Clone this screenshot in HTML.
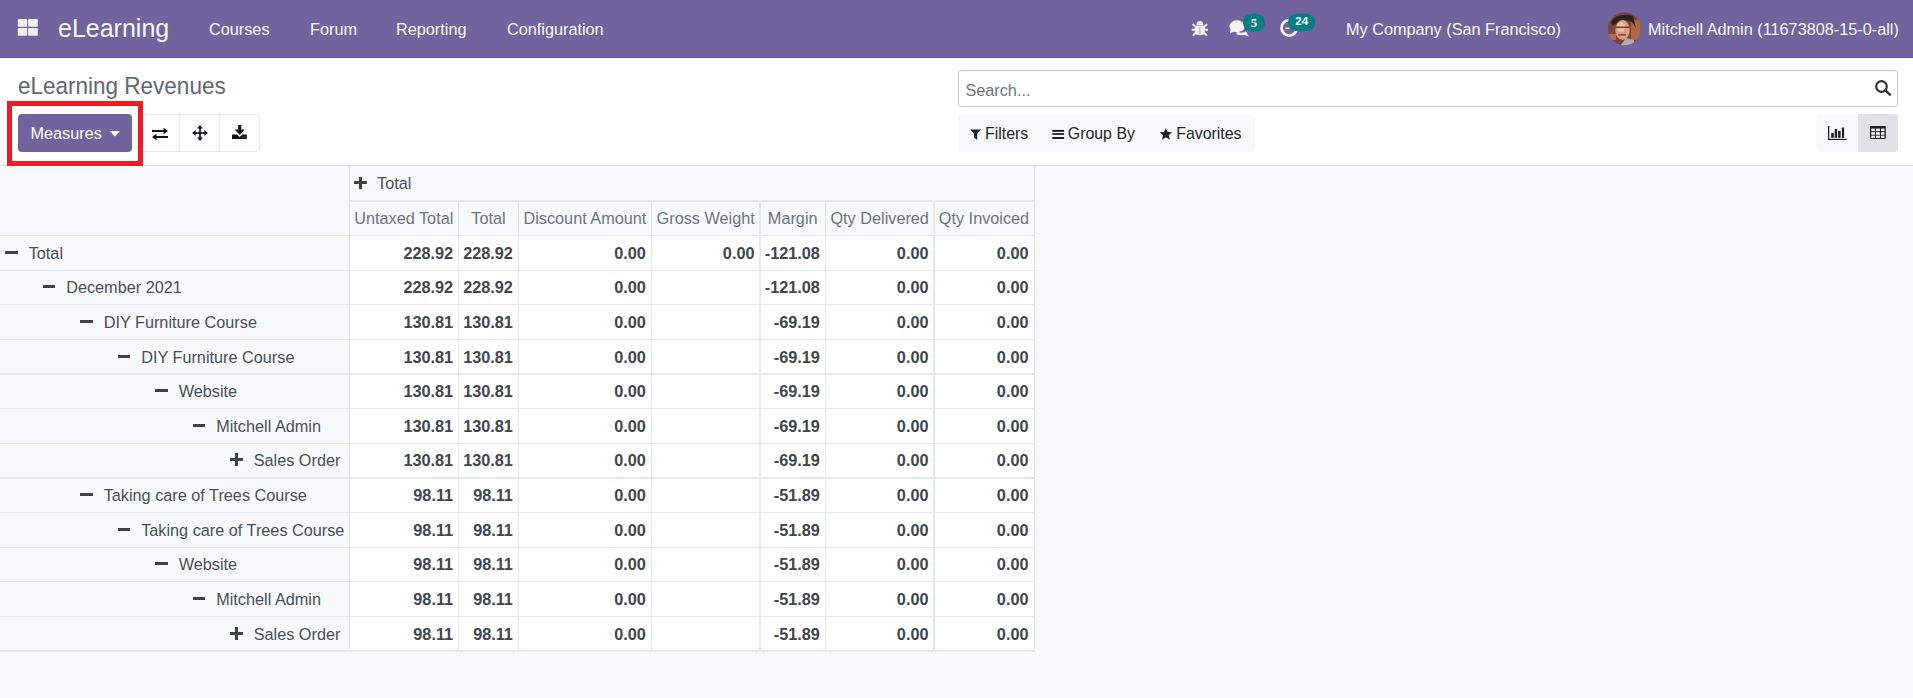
<!DOCTYPE html>
<html><head><meta charset="utf-8"><title>eLearning Revenues</title>
<style>
*{box-sizing:border-box;margin:0;padding:0}
html,body{width:1913px;height:698px;overflow:hidden;background:#f8f9fa;font-family:"Liberation Sans", sans-serif;}
.ic{position:absolute;z-index:5}
.abs, .hb,.db,.hl,.vl,.ht,.mh,.rt,.dv,.mi,.pl{position:absolute}
#nav{position:absolute;left:0;top:0;width:1913px;height:58px;background:#71639e;border-bottom:1px solid #5f5387}
.nt{position:absolute;color:#f8f8f8;font-size:16.25px;white-space:nowrap;line-height:20px}
#cp{position:absolute;left:0;top:58px;width:1913px;height:108px;background:#fff;border-bottom:1px solid #dde1e6}
.hb{background:#f8f9fa}
.db{background:#fff}
.hl{height:1px;background:#e5e8eb}
.vl{width:1px;background:#e5e8eb}
.ht{font-size:16.25px;color:#495057;white-space:nowrap}
.mh{font-size:16.25px;color:#6c757d;text-align:center;white-space:nowrap}
.rt{font-size:16.25px;color:#495057;white-space:nowrap}
.dv{font-size:16.25px;color:#40464d;font-weight:bold;white-space:nowrap;text-align:right}
.mi{width:12.7px;height:3px;background:#3d434a}
.pl{width:12.7px;height:12.7px}
.pl i{position:absolute;left:0;top:4.85px;width:12.7px;height:3px;background:#3d434a}
.pl b{position:absolute;left:4.85px;top:0;width:3px;height:12.7px;background:#3d434a}
</style></head>
<body>
<div id="nav">
  <svg style="position:absolute;left:14px;top:15px" width="28" height="25" viewBox="14 15 28 25">
    <rect x="17.8" y="18.9" width="9.4" height="7.9" rx="0.9" fill="#f0f0f2"/>
    <rect x="28.1" y="18.9" width="9.7" height="7.9" rx="0.9" fill="#f0f0f2"/>
    <rect x="17.8" y="27.9" width="9.4" height="7.8" rx="0.9" fill="#f0f0f2"/>
    <rect x="28.1" y="27.9" width="9.7" height="7.8" rx="0.9" fill="#f0f0f2"/>
  </svg>
  <div class="nt" style="left:58px;top:14px;font-size:25px;line-height:28px;transform:scaleY(1.06);transform-origin:0 100%">eLearning</div>
  <div class="nt" style="left:209px;top:19px">Courses</div>
  <div class="nt" style="left:310px;top:19px">Forum</div>
  <div class="nt" style="left:396px;top:19px">Reporting</div>
  <div class="nt" style="left:507px;top:19px">Configuration</div>
  <div class="nt" style="left:1346px;top:19px">My Company (San Francisco)</div>
  <svg style="position:absolute;left:1607px;top:12px" width="35" height="34" viewBox="1607 12 35 34">
    <defs><clipPath id="av"><circle cx="1624.4" cy="28.8" r="16.4"/></clipPath></defs>
    <g clip-path="url(#av)">
      <rect x="1607" y="12" width="35" height="34" fill="#7e4234"/>
      <rect x="1631" y="20" width="11" height="20" fill="#b0683f"/>
      <rect x="1607" y="24" width="8" height="10" fill="#7d4536"/>
      <rect x="1608" y="34" width="8" height="6" fill="#b07050"/>
      <path d="M1611 22 Q1618 12 1633 16 L1636 28 L1632 22 Q1622 17 1613 26 Z" fill="#2a2220"/>
      <ellipse cx="1622.5" cy="30" rx="7.2" ry="10" fill="#d8a07e"/>
      <ellipse cx="1621" cy="27" rx="4" ry="5" fill="#eac2a8"/>
      <rect x="1616" y="26.5" width="13" height="1.6" fill="#7a4030"/>
      <rect x="1618" y="34" width="8" height="1.6" fill="#8a4a3a"/>
      <path d="M1620 46 L1626 38 L1634 40 L1634 46 Z" fill="#a9adb3"/>
    </g>
  </svg>
  <div class="nt" style="left:1648px;top:19px">Mitchell Admin (11673808-15-0-all)</div>

<!-- navbar icons -->
<svg class="ic" style="left:0;top:0" width="1913" height="58" viewBox="0 0 1913 58">
  <g fill="#f3f3f3" stroke="none">
    <path d="M1196.4 25.4 A3.5 4.3 0 0 1 1203.4 25.4 Z"/>
    <path d="M1194.8 25.8 L1205 25.8 L1205 31.5 Q1205 35.3 1199.9 35.3 Q1194.8 35.3 1194.8 31.5 Z"/>
  </g>
  <g stroke="#f3f3f3" stroke-width="1.9" stroke-linecap="butt" fill="none">
    <path d="M1195.2 26.6 L1192.8 24 M1204.6 26.6 L1207 24 M1195 29.8 L1191.8 29.8 M1204.8 29.8 L1208 29.8 M1195.4 33 L1193 35.6 M1204.4 33 L1206.8 35.6"/>
  </g>
  <path d="M1199.9 27.2 L1199.9 34.8" stroke="#a89cc4" stroke-width="1"/>
  <!-- comments -->
  <g fill="#f3f3f3">
    <ellipse cx="1237" cy="26.3" rx="7.6" ry="6.1"/>
    <path d="M1230.5 29.5 L1229.8 33.6 L1234.5 31.5 Z"/>
    <path d="M1238 32 Q1242 33.5 1246 31.5 L1249 36.8 L1244.5 35 Q1240 36 1236 34 Z"/>
  </g>
  <rect x="1243" y="13.7" width="22" height="18" rx="9" fill="#017e84"/>
  <text x="1254" y="27" font-family="Liberation Serif" font-weight="bold" font-size="13" fill="#fff" text-anchor="middle">5</text>
  <!-- clock -->
  <circle cx="1289.2" cy="27.9" r="7.7" fill="none" stroke="#f3f3f3" stroke-width="2.8"/>
  <rect x="1285.5" y="27.5" width="4" height="1.6" fill="#f3f3f3"/>
  <rect x="1288" y="13.7" width="27.2" height="17.3" rx="8.6" fill="#017e84"/>
  <text x="1301.8" y="25.2" font-family="Liberation Sans" font-weight="bold" font-size="11.6" fill="#fff" text-anchor="middle">24</text>
</svg>
</div>
<div id="cp">
  <div style="position:absolute;left:18px;top:16px;font-size:22.5px;color:#5f6771;white-space:nowrap;line-height:26px;transform:scaleY(1.08);transform-origin:0 78%">eLearning Revenues</div>
  <div style="position:absolute;left:18px;top:56px;width:114px;height:38px;background:#71639e;border-radius:4px;color:#fff;font-size:16.25px;line-height:38px;padding-left:12.5px;white-space:nowrap">Measures</div>
  <div style="position:absolute;left:139px;top:56px;width:121px;height:38px;border:1px solid #e5e8eb;border-radius:4px;background:#fff"></div>
  <div style="position:absolute;left:179px;top:56px;width:1px;height:38px;background:#e5e8eb"></div>
  <div style="position:absolute;left:219px;top:56px;width:1px;height:38px;background:#e5e8eb"></div>
  <div style="position:absolute;left:7px;top:43px;width:136px;height:65px;border:5px solid #ed1c24"></div>
  <div style="position:absolute;left:958px;top:12px;width:940px;height:37px;border:1px solid #c8c9cb;border-radius:3.5px;background:#fff"></div>
  <div style="position:absolute;left:965.4px;top:13px;height:37px;line-height:39px;font-size:16.25px;color:#6c757d">Search...</div>
  <div style="position:absolute;left:958px;top:56px;width:297px;height:38px;background:#f8f9fa;border-radius:4px"></div>
  <div style="position:absolute;left:985px;top:56.8px;line-height:38px;font-size:15.9px;color:#212529;white-space:nowrap">Filters</div>
  <div style="position:absolute;left:1067.8px;top:56.8px;line-height:38px;font-size:15.9px;color:#212529;white-space:nowrap">Group By</div>
  <div style="position:absolute;left:1176.2px;top:56.8px;line-height:38px;font-size:15.9px;color:#212529;white-space:nowrap">Favorites</div>
  <div style="position:absolute;left:1816px;top:56px;width:82px;height:38px;background:#f8f9fa;border-radius:4px;overflow:hidden"><div style="position:absolute;left:42px;top:0;width:40px;height:38px;background:#dee2e6"></div></div>
</div>

<svg class="ic" style="left:0;top:58px" width="1913" height="108" viewBox="0 58 1913 108">
  <!-- caret -->
  <path d="M109.8 131 L120 131 L114.9 136.6 Z" fill="#fff"/>
  <!-- exchange -->
  <g fill="#111418">
    <rect x="152" y="130" width="12" height="2"/>
    <path d="M163.5 127.8 L168 131 L163.5 134.2 Z"/>
    <rect x="156" y="136" width="12" height="2"/>
    <path d="M156.5 133.8 L152 137 L156.5 140.2 Z"/>
  </g>
  <!-- arrows -->
  <g fill="#111418">
    <rect x="195" y="132.2" width="10" height="1.7"/>
    <rect x="199.15" y="128" width="1.7" height="10"/>
    <path d="M192 133 L195.6 130.1 L195.6 135.9 Z"/>
    <path d="M208 133 L204.4 130.1 L204.4 135.9 Z"/>
    <path d="M200 125 L197.1 128.6 L202.9 128.6 Z"/>
    <path d="M200 141 L197.1 137.4 L202.9 137.4 Z"/>
  </g>
  <!-- download -->
  <g fill="#111418">
    <rect x="238.2" y="125" width="3" height="5"/>
    <path d="M234.7 129.6 L244.7 129.6 L239.7 135 Z"/>
    <path d="M232 134.4 L237 134.4 L239.7 137 L242.4 134.4 L246.8 134.4 L246.8 138.9 L232 138.9 Z"/>
  </g>
  <rect x="242.5" y="136.6" width="1" height="1" fill="#6a6a6a"/>
  <rect x="244.5" y="136.6" width="1" height="1" fill="#6a6a6a"/>
  <!-- search -->
  <circle cx="1881.5" cy="86.5" r="5.3" fill="none" stroke="#2f343a" stroke-width="2.2"/>
  <path d="M1885.5 90.5 L1890 94.6" stroke="#2f343a" stroke-width="2.4" stroke-linecap="round"/>
  <!-- filter -->
  <path d="M970.3 129.6 L981.1 129.6 L977.2 133.8 L977.2 140 L974 137.6 L974 133.8 Z" fill="#1d2024"/>
  <!-- bars -->
  <g fill="#1d2024">
    <rect x="1052.3" y="129.9" width="11.8" height="2"/>
    <rect x="1052.3" y="133.1" width="11.8" height="1.8"/>
    <rect x="1052.3" y="137" width="11.8" height="2"/>
  </g>
  <!-- star -->
  <path d="M1165.9 127.9 L1167.7 132.1 L1172 132.3 L1168.7 135.2 L1169.8 139.8 L1165.9 137.3 L1162 139.8 L1163.1 135.2 L1159.8 132.3 L1164.1 132.1 Z" fill="#1d2024"/>
  <!-- chart -->
  <g fill="#1d2024">
    <rect x="1828" y="126" width="1.3" height="14"/>
    <rect x="1828" y="138.8" width="18.7" height="1.2"/>
    <rect x="1831.2" y="132.9" width="2.6" height="4.9"/>
    <rect x="1834.7" y="129" width="2.4" height="8.8"/>
    <rect x="1838.1" y="130.9" width="2.5" height="6.9"/>
    <rect x="1841.9" y="127.5" width="2.2" height="10.3"/>
  </g>
  <!-- table -->
  <rect x="1870" y="126" width="15.8" height="13" rx="0.8" fill="#1d2024"/>
  <g fill="#f4f4f4">
    <rect x="1871.3" y="128.6" width="3.6" height="2.6"/>
    <rect x="1876" y="128.6" width="3.9" height="2.6"/>
    <rect x="1881" y="128.6" width="3.5" height="2.6"/>
    <rect x="1871.3" y="132.2" width="3.6" height="2.6"/>
    <rect x="1876" y="132.2" width="3.9" height="2.6"/>
    <rect x="1881" y="132.2" width="3.5" height="2.6"/>
    <rect x="1871.3" y="135.6" width="3.6" height="2.4"/>
    <rect x="1876" y="135.6" width="3.9" height="2.4"/>
    <rect x="1881" y="135.6" width="3.5" height="2.4"/>
  </g>
</svg>
<div id="tbl">
<div class="hb" style="left:0;top:166px;width:1034px;height:69.5px"></div>
<div class="db" style="left:349px;top:235.500px;width:685px;height:34.583px"></div>
<div class="db" style="left:349px;top:270.083px;width:685px;height:34.583px"></div>
<div class="db" style="left:349px;top:304.667px;width:685px;height:34.583px"></div>
<div class="db" style="left:349px;top:339.250px;width:685px;height:34.583px"></div>
<div class="db" style="left:349px;top:373.833px;width:685px;height:34.583px"></div>
<div class="db" style="left:349px;top:408.417px;width:685px;height:34.583px"></div>
<div class="db" style="left:349px;top:443.000px;width:685px;height:34.583px"></div>
<div class="db" style="left:349px;top:477.583px;width:685px;height:34.583px"></div>
<div class="db" style="left:349px;top:512.167px;width:685px;height:34.583px"></div>
<div class="db" style="left:349px;top:546.750px;width:685px;height:34.583px"></div>
<div class="db" style="left:349px;top:581.333px;width:685px;height:34.583px"></div>
<div class="db" style="left:349px;top:615.917px;width:685px;height:34.583px"></div>
<div class="hl" style="left:349px;top:200px;width:686px;height:2px"></div>
<div class="hl" style="left:0px;top:235px;width:1035px;height:1px"></div>
<div class="hl" style="left:0px;top:270px;width:1035px;height:1px"></div>
<div class="hl" style="left:0px;top:304px;width:1035px;height:1px"></div>
<div class="hl" style="left:0px;top:339px;width:1035px;height:1px"></div>
<div class="hl" style="left:0px;top:373px;width:1035px;height:2px"></div>
<div class="hl" style="left:0px;top:408px;width:1035px;height:1px"></div>
<div class="hl" style="left:0px;top:443px;width:1035px;height:1px"></div>
<div class="hl" style="left:0px;top:477px;width:1035px;height:2px"></div>
<div class="hl" style="left:0px;top:512px;width:1035px;height:1px"></div>
<div class="hl" style="left:0px;top:547px;width:1035px;height:1px"></div>
<div class="hl" style="left:0px;top:581px;width:1035px;height:1px"></div>
<div class="hl" style="left:0px;top:616px;width:1035px;height:1px"></div>
<div class="hl" style="left:0px;top:650px;width:1035px;height:2px"></div>
<div class="vl" style="left:349px;top:166px;width:1px;height:486px"></div>
<div class="vl" style="left:458px;top:200px;width:1px;height:452px"></div>
<div class="vl" style="left:518px;top:200px;width:1px;height:452px"></div>
<div class="vl" style="left:651px;top:200px;width:1px;height:452px"></div>
<div class="vl" style="left:759px;top:200px;width:2px;height:452px"></div>
<div class="vl" style="left:825px;top:200px;width:1px;height:452px"></div>
<div class="vl" style="left:933px;top:200px;width:2px;height:452px"></div>
<div class="vl" style="left:1034px;top:166px;width:1px;height:486px"></div>
<div class="pl" style="left:354.20px;top:176.60px"><i></i><b></b></div>
<div class="ht" style="left:377px;top:166px;height:34.5px;line-height:34.5px">Total</div>
<div class="mh" style="left:349px;top:200.5px;width:109.60000000000002px;height:35px;line-height:35px">Untaxed Total</div>
<div class="mh" style="left:458.6px;top:200.5px;width:59.799999999999955px;height:35px;line-height:35px">Total</div>
<div class="mh" style="left:518.4px;top:200.5px;width:133.0px;height:35px;line-height:35px">Discount Amount</div>
<div class="mh" style="left:651.4px;top:200.5px;width:108.60000000000002px;height:35px;line-height:35px">Gross Weight</div>
<div class="mh" style="left:760px;top:200.5px;width:65.39999999999998px;height:35px;line-height:35px">Margin</div>
<div class="mh" style="left:825.4px;top:200.5px;width:108.60000000000002px;height:35px;line-height:35px">Qty Delivered</div>
<div class="mh" style="left:934px;top:200.5px;width:100px;height:35px;line-height:35px">Qty Invoiced</div>
<div class="mi" style="left:5.20px;top:250.69px"></div>
<div class="rt" style="left:28.70px;top:235.500px;height:34.583px;line-height:34.583px">Total</div>
<div class="dv" style="right:1459.90px;top:235.500px;height:34.583px;line-height:34.583px">228.92</div>
<div class="dv" style="right:1400.10px;top:235.500px;height:34.583px;line-height:34.583px">228.92</div>
<div class="dv" style="right:1267.10px;top:235.500px;height:34.583px;line-height:34.583px">0.00</div>
<div class="dv" style="right:1158.50px;top:235.500px;height:34.583px;line-height:34.583px">0.00</div>
<div class="dv" style="right:1093.10px;top:235.500px;height:34.583px;line-height:34.583px">-121.08</div>
<div class="dv" style="right:984.50px;top:235.500px;height:34.583px;line-height:34.583px">0.00</div>
<div class="dv" style="right:884.50px;top:235.500px;height:34.583px;line-height:34.583px">0.00</div>
<div class="mi" style="left:42.70px;top:285.27px"></div>
<div class="rt" style="left:66.20px;top:270.083px;height:34.583px;line-height:34.583px">December 2021</div>
<div class="dv" style="right:1459.90px;top:270.083px;height:34.583px;line-height:34.583px">228.92</div>
<div class="dv" style="right:1400.10px;top:270.083px;height:34.583px;line-height:34.583px">228.92</div>
<div class="dv" style="right:1267.10px;top:270.083px;height:34.583px;line-height:34.583px">0.00</div>
<div class="dv" style="right:1093.10px;top:270.083px;height:34.583px;line-height:34.583px">-121.08</div>
<div class="dv" style="right:984.50px;top:270.083px;height:34.583px;line-height:34.583px">0.00</div>
<div class="dv" style="right:884.50px;top:270.083px;height:34.583px;line-height:34.583px">0.00</div>
<div class="mi" style="left:80.20px;top:319.86px"></div>
<div class="rt" style="left:103.70px;top:304.667px;height:34.583px;line-height:34.583px">DIY Furniture Course</div>
<div class="dv" style="right:1459.90px;top:304.667px;height:34.583px;line-height:34.583px">130.81</div>
<div class="dv" style="right:1400.10px;top:304.667px;height:34.583px;line-height:34.583px">130.81</div>
<div class="dv" style="right:1267.10px;top:304.667px;height:34.583px;line-height:34.583px">0.00</div>
<div class="dv" style="right:1093.10px;top:304.667px;height:34.583px;line-height:34.583px">-69.19</div>
<div class="dv" style="right:984.50px;top:304.667px;height:34.583px;line-height:34.583px">0.00</div>
<div class="dv" style="right:884.50px;top:304.667px;height:34.583px;line-height:34.583px">0.00</div>
<div class="mi" style="left:117.70px;top:355.44px"></div>
<div class="rt" style="left:141.20px;top:340.250px;height:34.583px;line-height:34.583px">DIY Furniture Course</div>
<div class="dv" style="right:1459.90px;top:340.250px;height:34.583px;line-height:34.583px">130.81</div>
<div class="dv" style="right:1400.10px;top:340.250px;height:34.583px;line-height:34.583px">130.81</div>
<div class="dv" style="right:1267.10px;top:340.250px;height:34.583px;line-height:34.583px">0.00</div>
<div class="dv" style="right:1093.10px;top:340.250px;height:34.583px;line-height:34.583px">-69.19</div>
<div class="dv" style="right:984.50px;top:340.250px;height:34.583px;line-height:34.583px">0.00</div>
<div class="dv" style="right:884.50px;top:340.250px;height:34.583px;line-height:34.583px">0.00</div>
<div class="mi" style="left:155.20px;top:389.03px"></div>
<div class="rt" style="left:178.70px;top:373.833px;height:34.583px;line-height:34.583px">Website</div>
<div class="dv" style="right:1459.90px;top:373.833px;height:34.583px;line-height:34.583px">130.81</div>
<div class="dv" style="right:1400.10px;top:373.833px;height:34.583px;line-height:34.583px">130.81</div>
<div class="dv" style="right:1267.10px;top:373.833px;height:34.583px;line-height:34.583px">0.00</div>
<div class="dv" style="right:1093.10px;top:373.833px;height:34.583px;line-height:34.583px">-69.19</div>
<div class="dv" style="right:984.50px;top:373.833px;height:34.583px;line-height:34.583px">0.00</div>
<div class="dv" style="right:884.50px;top:373.833px;height:34.583px;line-height:34.583px">0.00</div>
<div class="mi" style="left:192.70px;top:423.61px"></div>
<div class="rt" style="left:216.20px;top:409.417px;height:34.583px;line-height:34.583px">Mitchell Admin</div>
<div class="dv" style="right:1459.90px;top:409.417px;height:34.583px;line-height:34.583px">130.81</div>
<div class="dv" style="right:1400.10px;top:409.417px;height:34.583px;line-height:34.583px">130.81</div>
<div class="dv" style="right:1267.10px;top:409.417px;height:34.583px;line-height:34.583px">0.00</div>
<div class="dv" style="right:1093.10px;top:409.417px;height:34.583px;line-height:34.583px">-69.19</div>
<div class="dv" style="right:984.50px;top:409.417px;height:34.583px;line-height:34.583px">0.00</div>
<div class="dv" style="right:884.50px;top:409.417px;height:34.583px;line-height:34.583px">0.00</div>
<div class="pl" style="left:230.20px;top:453.14px"><i></i><b></b></div>
<div class="rt" style="left:253.70px;top:443.000px;height:34.583px;line-height:34.583px">Sales Order</div>
<div class="dv" style="right:1459.90px;top:443.000px;height:34.583px;line-height:34.583px">130.81</div>
<div class="dv" style="right:1400.10px;top:443.000px;height:34.583px;line-height:34.583px">130.81</div>
<div class="dv" style="right:1267.10px;top:443.000px;height:34.583px;line-height:34.583px">0.00</div>
<div class="dv" style="right:1093.10px;top:443.000px;height:34.583px;line-height:34.583px">-69.19</div>
<div class="dv" style="right:984.50px;top:443.000px;height:34.583px;line-height:34.583px">0.00</div>
<div class="dv" style="right:884.50px;top:443.000px;height:34.583px;line-height:34.583px">0.00</div>
<div class="mi" style="left:80.20px;top:492.78px"></div>
<div class="rt" style="left:103.70px;top:477.583px;height:34.583px;line-height:34.583px">Taking care of Trees Course</div>
<div class="dv" style="right:1459.90px;top:477.583px;height:34.583px;line-height:34.583px">98.11</div>
<div class="dv" style="right:1400.10px;top:477.583px;height:34.583px;line-height:34.583px">98.11</div>
<div class="dv" style="right:1267.10px;top:477.583px;height:34.583px;line-height:34.583px">0.00</div>
<div class="dv" style="right:1093.10px;top:477.583px;height:34.583px;line-height:34.583px">-51.89</div>
<div class="dv" style="right:984.50px;top:477.583px;height:34.583px;line-height:34.583px">0.00</div>
<div class="dv" style="right:884.50px;top:477.583px;height:34.583px;line-height:34.583px">0.00</div>
<div class="mi" style="left:117.70px;top:528.36px"></div>
<div class="rt" style="left:141.20px;top:513.167px;height:34.583px;line-height:34.583px">Taking care of Trees Course</div>
<div class="dv" style="right:1459.90px;top:513.167px;height:34.583px;line-height:34.583px">98.11</div>
<div class="dv" style="right:1400.10px;top:513.167px;height:34.583px;line-height:34.583px">98.11</div>
<div class="dv" style="right:1267.10px;top:513.167px;height:34.583px;line-height:34.583px">0.00</div>
<div class="dv" style="right:1093.10px;top:513.167px;height:34.583px;line-height:34.583px">-51.89</div>
<div class="dv" style="right:984.50px;top:513.167px;height:34.583px;line-height:34.583px">0.00</div>
<div class="dv" style="right:884.50px;top:513.167px;height:34.583px;line-height:34.583px">0.00</div>
<div class="mi" style="left:155.20px;top:561.94px"></div>
<div class="rt" style="left:178.70px;top:546.750px;height:34.583px;line-height:34.583px">Website</div>
<div class="dv" style="right:1459.90px;top:546.750px;height:34.583px;line-height:34.583px">98.11</div>
<div class="dv" style="right:1400.10px;top:546.750px;height:34.583px;line-height:34.583px">98.11</div>
<div class="dv" style="right:1267.10px;top:546.750px;height:34.583px;line-height:34.583px">0.00</div>
<div class="dv" style="right:1093.10px;top:546.750px;height:34.583px;line-height:34.583px">-51.89</div>
<div class="dv" style="right:984.50px;top:546.750px;height:34.583px;line-height:34.583px">0.00</div>
<div class="dv" style="right:884.50px;top:546.750px;height:34.583px;line-height:34.583px">0.00</div>
<div class="mi" style="left:192.70px;top:596.52px"></div>
<div class="rt" style="left:216.20px;top:582.333px;height:34.583px;line-height:34.583px">Mitchell Admin</div>
<div class="dv" style="right:1459.90px;top:582.333px;height:34.583px;line-height:34.583px">98.11</div>
<div class="dv" style="right:1400.10px;top:582.333px;height:34.583px;line-height:34.583px">98.11</div>
<div class="dv" style="right:1267.10px;top:582.333px;height:34.583px;line-height:34.583px">0.00</div>
<div class="dv" style="right:1093.10px;top:582.333px;height:34.583px;line-height:34.583px">-51.89</div>
<div class="dv" style="right:984.50px;top:582.333px;height:34.583px;line-height:34.583px">0.00</div>
<div class="dv" style="right:884.50px;top:582.333px;height:34.583px;line-height:34.583px">0.00</div>
<div class="pl" style="left:230.20px;top:627.06px"><i></i><b></b></div>
<div class="rt" style="left:253.70px;top:616.917px;height:34.583px;line-height:34.583px">Sales Order</div>
<div class="dv" style="right:1459.90px;top:616.917px;height:34.583px;line-height:34.583px">98.11</div>
<div class="dv" style="right:1400.10px;top:616.917px;height:34.583px;line-height:34.583px">98.11</div>
<div class="dv" style="right:1267.10px;top:616.917px;height:34.583px;line-height:34.583px">0.00</div>
<div class="dv" style="right:1093.10px;top:616.917px;height:34.583px;line-height:34.583px">-51.89</div>
<div class="dv" style="right:984.50px;top:616.917px;height:34.583px;line-height:34.583px">0.00</div>
<div class="dv" style="right:884.50px;top:616.917px;height:34.583px;line-height:34.583px">0.00</div>
</div>
</body></html>
